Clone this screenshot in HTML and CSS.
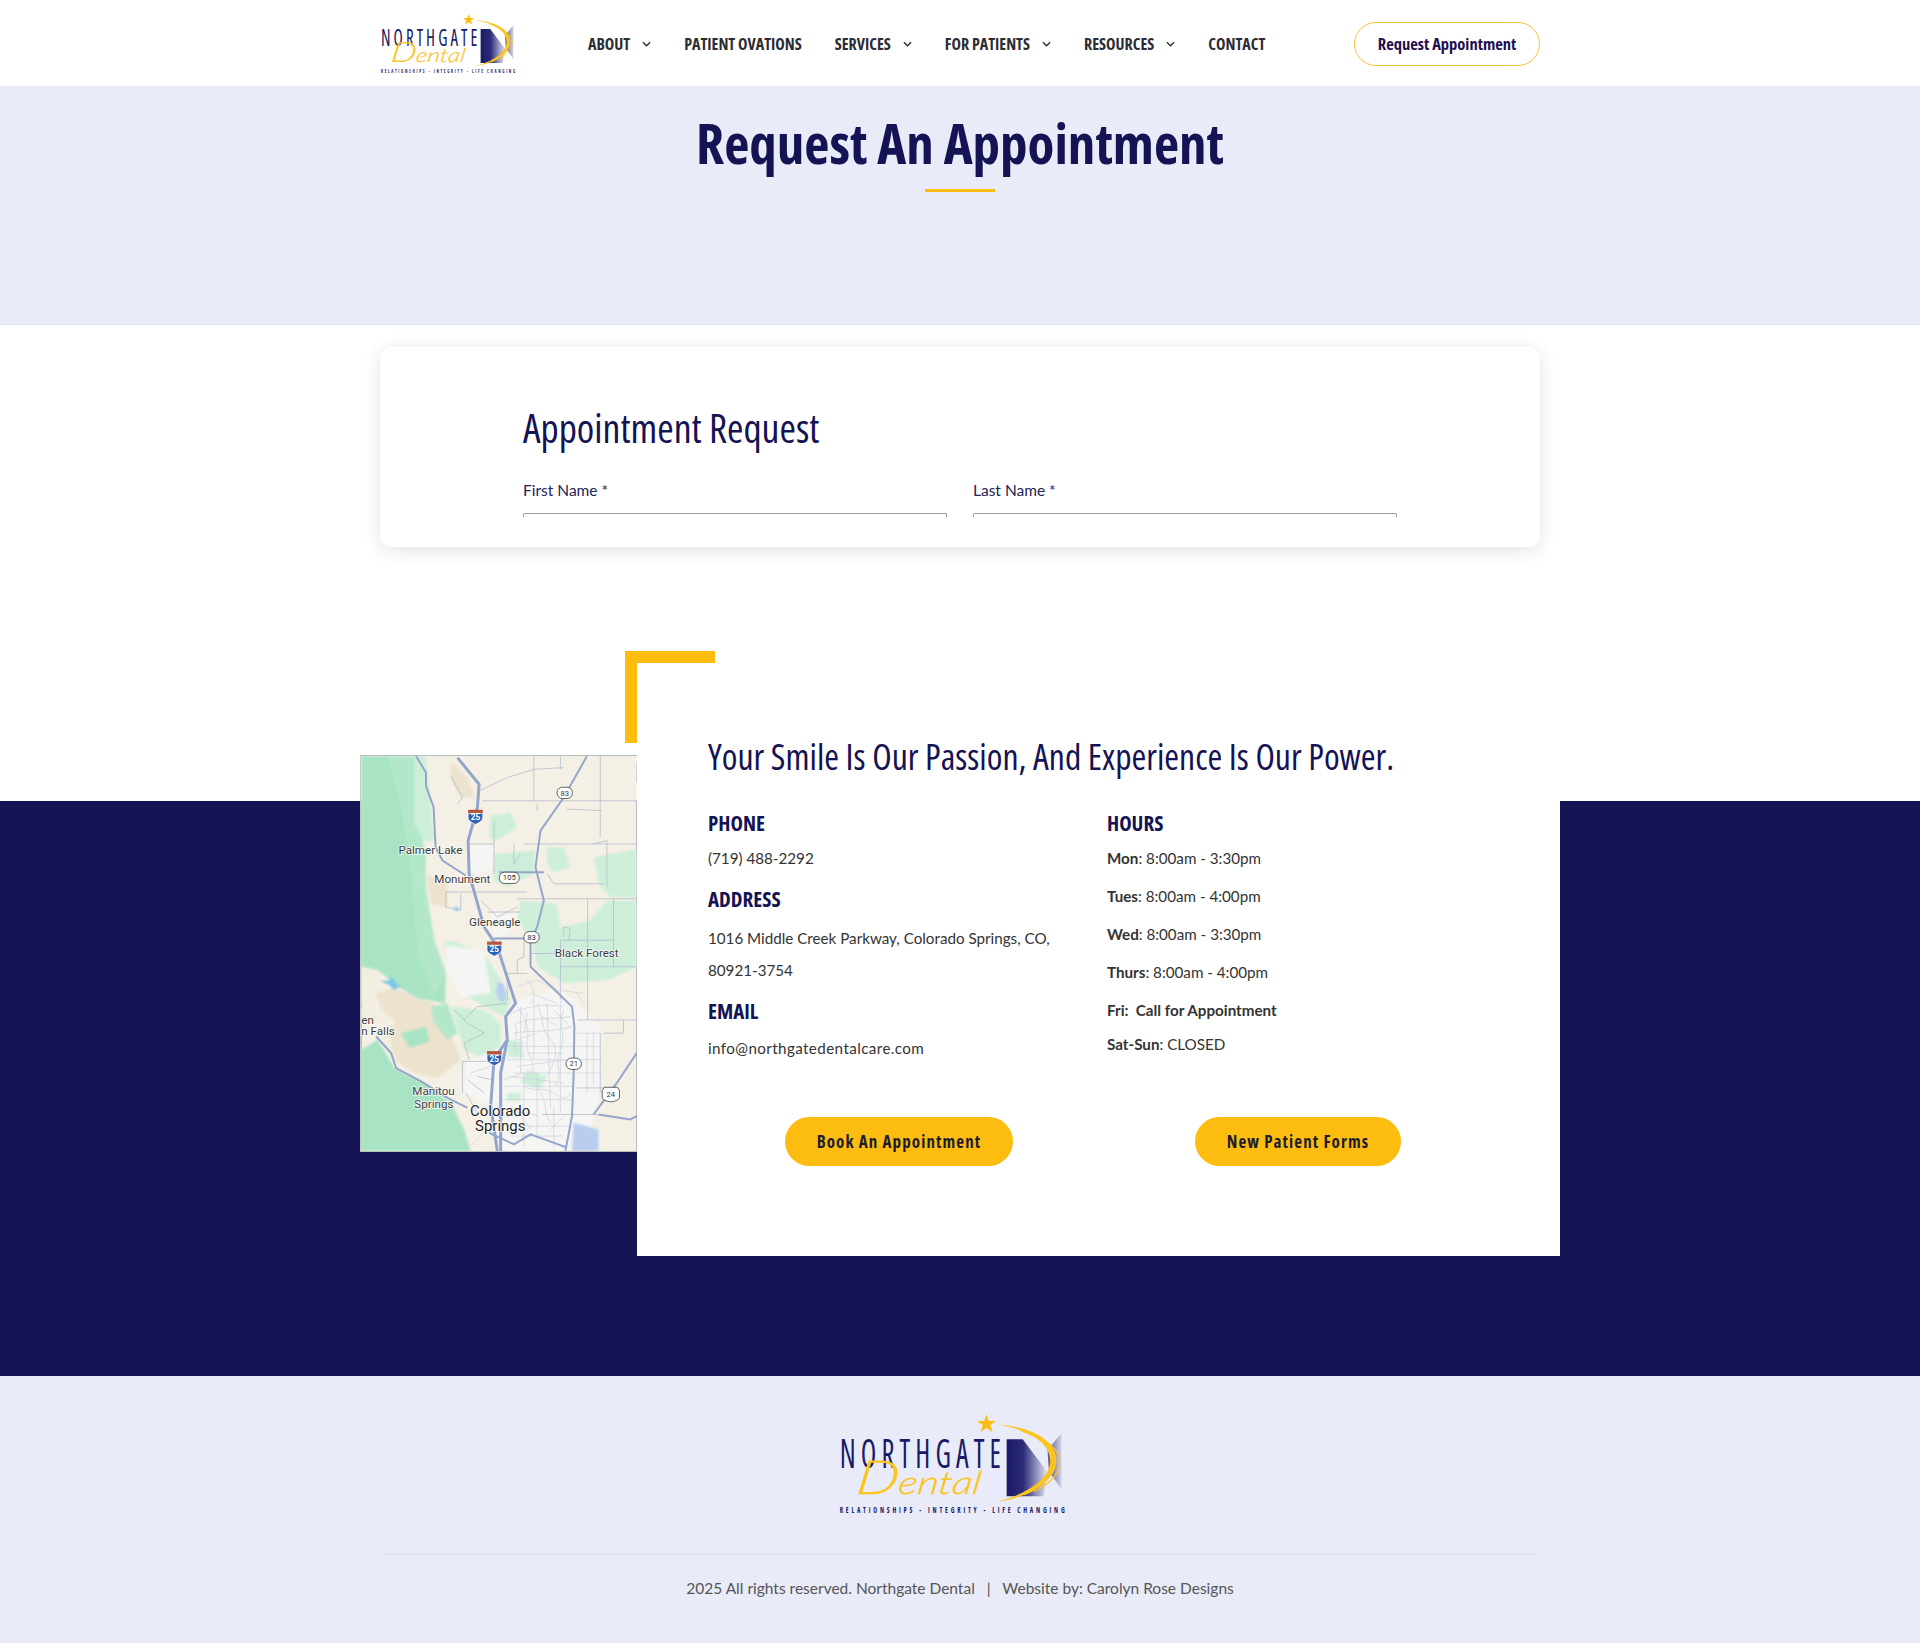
FILE: index.html
```html
<!DOCTYPE html>
<html lang="en">
<head>
  <meta charset="UTF-8" />
  <meta name="viewport" content="width=device-width, initial-scale=1.0"/>
  <title>Northgate Dental - Request An Appointment</title>
  <link rel="stylesheet" href="styles.css">
</head>
<body>

  <!-- shared logo, used in header and footer -->
  <svg class="defs" width="0" height="0" aria-hidden="true">
    <defs>
      <linearGradient id="block-fade" x1="0" x2="1" y1="0" y2="0">
        <stop offset="0" stop-color="#1b1a66"/>
        <stop offset="0.4" stop-color="#2a2a78"/>
        <stop offset="1" stop-color="#e4e6f2"/>
      </linearGradient>
      <linearGradient id="wing-fade" x1="1" x2="0" y1="0" y2="0">
        <stop offset="0" stop-color="#d4d7e6"/>
        <stop offset="1" stop-color="#4f5390"/>
      </linearGradient>
      <symbol id="logo" viewBox="55 45 680 300">
        <polygon class="logo-star" points="498,46 505,65 526,65 509,78 516,98 498,86 480,98 487,78 470,65 491,65"/>
        <polygon fill="url(#block-fade)" points="558,120 606,120 680,218 668,290 558,290"/>
        <polygon fill="url(#wing-fade)" points="722,100 680,152 684,215 722,270"/>
        <path class="logo-swoosh" d="M530 76C640 82 712 130 706 190 700 250 620 295 530 306 610 285 682 245 688 190 692 140 640 92 530 76Z"/>
        <path class="logo-arc" d="M600 94C670 118 700 150 696 190 692 230 660 262 610 286"/>
        <path class="logo-arc" d="M640 104C690 130 722 160 716 196 710 232 680 256 640 276"/>
        <text class="logo-name" transform="translate(60 205) scale(0.72 1)" textLength="668" lengthAdjust="spacing">NORTHGATE</text>
        <text class="logo-script" transform="translate(106 284) skewX(-8)" textLength="372" lengthAdjust="spacingAndGlyphs"><tspan class="logo-cap">D</tspan>ental</text>
        <text class="logo-tag" transform="translate(60 340) scale(0.72 1)" textLength="932" lengthAdjust="spacing">RELATIONSHIPS - INTEGRITY - LIFE CHANGING</text>
      </symbol>
    </defs>
  </svg>

  <header class="site-header">
    <div class="container header-row">
      <a href="#" class="logo-link"><svg class="logo-small"><use href="#logo"/></svg></a>
      <ul class="nav-links">
        <li><a href="#">About<svg class="chevron" viewBox="0 0 10 6"><path d="M1 1l4 4 4-4"/></svg></a></li>
        <li><a href="#">Patient Ovations</a></li>
        <li><a href="#">Services<svg class="chevron" viewBox="0 0 10 6"><path d="M1 1l4 4 4-4"/></svg></a></li>
        <li><a href="#">For Patients<svg class="chevron" viewBox="0 0 10 6"><path d="M1 1l4 4 4-4"/></svg></a></li>
        <li><a href="#">Resources<svg class="chevron" viewBox="0 0 10 6"><path d="M1 1l4 4 4-4"/></svg></a></li>
        <li><a href="#">Contact</a></li>
      </ul>
      <a href="#" class="header-btn">Request Appointment</a>
    </div>
  </header>

  <section class="hero">
    <h1>Request An Appointment</h1>
    <div class="hero-line"></div>
  </section>

  <section class="container form-card">
    <h2>Appointment Request</h2>
    <div class="form-row">
      <div class="field">
        <label>First Name *</label>
        <div class="field-input"></div>
      </div>
      <div class="field">
        <label>Last Name *</label>
        <div class="field-input"></div>
      </div>
    </div>
  </section>

  <section class="location">
    <div class="location-inner">
      <svg class="map" viewBox="30 45 830 1190" role="img" aria-label="Map of the area north of Colorado Springs">
        <rect x="30" y="45" width="830" height="1190" fill="#f5f0e5"/>

        <!-- terrain -->
        <g class="terrain">
          <path class="forest" d="M30 45H190L200 150 215 300 225 350 222 440 250 600 285 700 282 790 200 775 140 740 80 690 30 680Z"/>
          <path class="forest-soft" d="M110 45H190L215 300 225 440 250 600 285 700 250 770 200 640 180 400 150 200Z"/>
          <path class="forest" d="M30 930L80 900 130 985 210 1025 300 1090 340 1170 360 1235H30Z"/>
          <path class="pale" d="M30 680L80 690 90 760 60 800 30 790Z"/>
          <path class="tan" d="M75 760L130 745 200 775 250 790 300 880 330 960 260 1015 190 1000 130 960 110 900 130 840 90 810Z"/>
          <path class="forest" d="M150 880L225 860 235 905 175 925Z"/>
          <path class="forest-soft" d="M240 800L290 790 320 880 290 900 250 850Z"/>
          <path class="pale" d="M30 800L90 810 120 900 130 960 80 900 30 850Z"/>
          <path class="tan" d="M300 60L350 110 372 170 330 170 300 120Z"/>
          <path class="tan" d="M225 400L290 430 290 500 240 490Z"/>
          <path class="meadow" d="M190 45H225L250 300H220L190 250Z"/>
          <path class="meadow" d="M420 225L480 215 500 260 440 300 415 290Z"/>
          <path class="meadow" d="M590 320L640 320 660 380 610 395 590 370Z"/>
          <path class="meadow" d="M730 350L860 325V470H780L745 430Z"/>
          <path class="meadow" d="M430 340L555 330 550 400 470 440 430 420Z"/>
          <path class="meadow" d="M510 480L620 490 630 560 720 540 770 480H860V680L780 720 640 730 560 680 545 600 500 540Z"/>
          <path class="meadow" d="M280 610L300 600 400 640 440 700 480 780 460 830 400 800 340 760 300 700Z"/>
          <path class="meadow" d="M300 800L400 810 450 850 450 920 400 960 340 930Z"/>
          <path class="city" d="M285 615L400 630 420 760 330 770 290 700Z"/>
          <path class="city" d="M350 310H430V380L390 400H350Z"/>
          <path class="city" d="M420 520H500L480 575 430 590Z"/>
          <path class="city" d="M480 790L620 740 670 780 750 860 750 1060 700 1235H440L420 1100 340 1060 345 965 460 920Z"/>
          <path class="meadow" d="M530 990L590 1010 570 1050 510 1030Z"/>
          <path class="meadow" d="M470 1060H510V1085H470Z"/>
          <path class="meadow" d="M470 900L515 905 520 955 470 950Z"/>
          <path class="water" d="M445 725C465 725 472 770 460 785 440 790 430 750 445 725Z"/>
          <path class="water" d="M670 1150L745 1170 745 1235H665Z"/>
          <path class="lake" d="M85 722L115 722 120 708 135 730 148 738 128 750 115 735Z"/>
          <path class="lake" d="M310 500L325 502 320 512 310 508Z"/>
        </g>

        <!-- minor roads -->
        <path class="minor" d="M550 45V180M630 45V85M750 45V290M860 65V125M385 150L470 110 550 85 640 80M395 180H860M560 190V210M650 205L755 210M520 310H860M430 310H350M430 245V400M490 310V370L510 340M725 310L770 300V440M590 400L610 430H760M285 455H530M285 455V500L330 510V460M500 475H860M712 475V840M790 475V680M630 600H790M630 680H860M630 600V780M540 640H620M470 700H530M470 700V780M520 600V650L500 660 500 700M390 480L440 530 500 500M410 515H510M340 840L380 800 470 790M310 810L350 850 400 880 340 910 355 960M335 965H420M335 965V1060M350 1020L400 1060M680 840H860M820 840V880H760M750 880V1060M680 1045H760M575 1125H745M420 1020L380 1010M345 1060L380 1120M300 105L335 170 320 190M640 590V560L660 565 655 600"/>
        <path class="minor thin" d="M480 820C530 800 580 790 640 800M500 850C550 830 600 840 660 830M490 880C540 870 600 880 665 860M510 800V1000M550 780V960M590 790L600 1110M630 770V1120M480 920H670M470 960H670M490 1000H670M460 1040H670M455 1080H665M520 1000V1220M560 1000V1200M610 1100V1230M680 880H750M680 920H750M680 960H750M680 1000H750M710 880V1060M730 880V1040M500 740L560 720 620 750 700 760M540 760L620 790M440 1160H660M480 1190H640M360 1000L420 980M400 1180L360 1220M680 760L700 790M500 800C520 830 540 860 530 900S560 960 545 1000M560 790C580 830 570 870 600 900S610 970 590 1010M640 810C620 850 650 890 630 930S640 1000 615 1040M490 850C510 880 480 910 500 940M520 1040C550 1060 580 1040 610 1060S650 1080 660 1060M470 1110C500 1130 530 1110 560 1130M570 1060C590 1090 580 1120 600 1150M510 1130L540 1170M640 1130L600 1170M530 720C550 740 560 770 540 790M600 730L640 770M530 940H640M500 980L650 960M480 1010L640 1030M530 820L520 880M575 830L620 860M610 810L650 850M500 900L560 880M460 1020L520 1000M440 1130H520"/>

        <!-- highways -->
        <path class="road" d="M195 45L225 95V135L248 200 254 320 275 360 345 405"/>
        <path class="road" d="M75 890L120 940 135 985 210 1025 290 1075 350 1105"/>
        <path class="road" d="M540 680L665 800 672 860 670 1000 665 1130 645 1235"/>
        <path class="road" d="M710 45L640 170 570 270 555 380 580 480 560 560 540 600 540 680"/>
        <path class="road" d="M445 395H580"/>
        <path class="road" d="M730 1125L800 1030 860 940"/>
        <path class="road" d="M745 1125L840 1140 860 1130"/>
        <path class="road" d="M430 595H530"/>
        <path class="road" d="M415 1180L490 1215 540 1185 650 1225"/>
        <path class="road main" d="M320 50L385 130 380 200 352 300 355 400 400 560 440 620 495 790 465 830 470 900 430 960 420 1100 440 1235"/>
        <path class="road main" d="M470 900L450 1000 450 1235"/>

        <!-- shields -->
        <g class="shield" transform="translate(374 227)"><path class="shield-top" d="M-22 -20H22V-8H-22Z"/><path class="shield-body" d="M-22 -9H22V4C22 14 8 20 0 24 -8 20 -22 14 -22 4Z"/><text y="12">25</text></g>
        <g class="shield" transform="translate(431 624)"><path class="shield-top" d="M-22 -20H22V-8H-22Z"/><path class="shield-body" d="M-22 -9H22V4C22 14 8 20 0 24 -8 20 -22 14 -22 4Z"/><text y="12">25</text></g>
        <g class="shield" transform="translate(431 954)"><path class="shield-top" d="M-22 -20H22V-8H-22Z"/><path class="shield-body" d="M-22 -9H22V4C22 14 8 20 0 24 -8 20 -22 14 -22 4Z"/><text y="12">25</text></g>
        <g class="route" transform="translate(643 156)"><rect x="-23" y="-17" width="46" height="34" rx="16"/><text y="8">83</text></g>
        <g class="route" transform="translate(543 591)"><rect x="-23" y="-17" width="46" height="34" rx="16"/><text y="8">83</text></g>
        <g class="route" transform="translate(476 412)"><rect x="-30" y="-17" width="60" height="34" rx="16"/><text y="8">105</text></g>
        <g class="route" transform="translate(670 972)"><rect x="-23" y="-17" width="46" height="34" rx="16"/><text y="8">21</text></g>
        <g class="route" transform="translate(782 1065)"><path d="M-20 -22H20L26 -12V8C26 16 14 20 0 22 -14 20 -26 16 -26 8V-12Z"/><text y="8">24</text></g>

        <!-- place names -->
        <g class="place">
          <text x="142" y="341">Palmer Lake</text>
          <text x="250" y="428">Monument</text>
          <text x="355" y="557">Gleneagle</text>
          <text x="613" y="650">Black Forest</text>
          <text x="30" y="852">en</text>
          <text x="30" y="887">n Falls</text>
          <text x="184" y="1067">Manitou</text>
          <text x="190" y="1104">Springs</text>
          <text class="big" x="358" y="1130">Colorado</text>
          <text class="big" x="373" y="1176">Springs</text>
        </g>
      </svg>

      <div class="info-card">
        <div class="corner"></div>
        <h2>Your Smile Is Our Passion, And Experience Is Our Power.</h2>
        <div class="info-cols info-top">
          <div class="info-col">
            <h3>PHONE</h3>
            <p>(719) 488-2292</p>
            <h3 class="address-head">ADDRESS</h3>
            <p class="address">1016 Middle Creek Parkway, Colorado Springs, CO, 80921-3754</p>
            <h3 class="email-head">EMAIL</h3>
            <p class="email">info@northgatedentalcare.com</p>
          </div>
          <div class="info-col">
            <h3>HOURS</h3>
            <ul class="hours">
              <li><strong>Mon</strong>: 8:00am - 3:30pm</li>
              <li><strong>Tues</strong>: 8:00am - 4:00pm</li>
              <li><strong>Wed</strong>: 8:00am - 3:30pm</li>
              <li><strong>Thurs</strong>: 8:00am - 4:00pm</li>
              <li><strong>Fri:&nbsp; Call for Appointment</strong></li>
              <li class="last"><strong>Sat-Sun</strong>: CLOSED</li>
            </ul>
          </div>
        </div>
        <div class="info-cols btn-row">
          <div class="info-col"><a href="#" class="gold-btn book">Book An Appointment</a></div>
          <div class="info-col"><a href="#" class="gold-btn forms">New Patient Forms</a></div>
        </div>
      </div>
    </div>
  </section>

  <footer>
    <svg class="logo-large"><use href="#logo"/></svg>
    <div class="container footer-bottom">
      <p>2025 All rights reserved. Northgate Dental &nbsp; | &nbsp; Website by: Carolyn Rose Designs</p>
    </div>
  </footer>

</body>
</html>
```

FILE: styles.css
```css
/* === Global Styles === */
body {
  font-family: "Lato", "Open Sans", sans-serif;
  margin: 0;
  padding: 0;
  background-color: #fff;
  color: #333;
  font-size: 15.2px;
}

h1, h2, h3, p, ul {
  margin: 0;
  padding: 0;
}

a {
  text-decoration: none;
  color: inherit;
}

.container {
  width: 1160px;
  margin: 0 auto;
}

.defs {
  position: absolute;
}

/* condensed face, stands in for the site's narrow headings */
.hero h1,
.form-card h2,
.info-card h2,
.info-col h3,
.nav-links a,
.header-btn,
.gold-btn {
  font-family: "Open Sans", sans-serif;
  font-stretch: 75%;
}

/* === Logo === */
.logo-star { fill: #fdbd10; }
.logo-swoosh { fill: #fcc41e; }
.logo-arc { fill: none; stroke: #fcc41e; stroke-width: 3.5; }
.logo-name {
  font-family: "Open Sans", sans-serif;
  font-stretch: 75%;
  font-size: 118px;
  fill: #1b1a66;
}
.logo-script {
  font-family: "Lato", sans-serif;
  font-weight: 300;
  font-style: italic;
  font-size: 96px;
  fill: #fcc41e;
  stroke: #fcc41e;
  stroke-width: 1;
}
.logo-cap { font-size: 140px; }
.logo-tag {
  font-family: "Open Sans", sans-serif;
  font-stretch: 75%;
  font-weight: 700;
  font-size: 27px;
  fill: #1b1a66;
}

.logo-small {
  display: block;
  width: 136px;
  height: 60px;
}

.logo-large {
  display: block;
  width: 228px;
  height: 101px;
  margin: 0 auto;
  position: relative;
  left: -8px;
}

/* === Navbar === */
.site-header {
  box-sizing: border-box;
  height: 86px;
  padding-top: 2px;
  background: #fff;
}

.header-row {
  height: 100%;
  display: flex;
  align-items: center;
}

.logo-link {
  margin-right: 72px;
}

.nav-links {
  list-style: none;
  display: flex;
  gap: 33px;
  flex: 1;
}

.nav-links a {
  display: flex;
  align-items: center;
  font-size: 16px;
  font-weight: 700;
  text-transform: uppercase;
  color: #2c2c33;
}

.chevron {
  width: 9px;
  height: 6px;
  margin-left: 12px;
  fill: none;
  stroke: #2c2c33;
  stroke-width: 1.5;
}

.header-btn {
  box-sizing: border-box;
  width: 186px;
  height: 44px;
  line-height: 42px;
  text-align: center;
  border: 1px solid #f3c33c;
  border-radius: 22px;
  font-size: 16.5px;
  font-weight: 700;
  color: #1f0f4d;
}

/* === Hero === */
.hero {
  box-sizing: border-box;
  height: 239px;
  background-color: #e9ecf8;
  border-bottom: 1px solid #dfe2ee;
  padding-top: 26px;
  text-align: center;
}

.hero h1 {
  font-size: 55px;
  line-height: 62px;
  font-weight: 700;
  color: #141354;
}

.hero-line {
  width: 70px;
  height: 3px;
  margin: 15px auto 0;
  background: #fdbd10;
}

/* === Form card === */
.form-card {
  position: relative;
  z-index: 1;
  box-sizing: border-box;
  height: 200px;
  margin-top: 22px;
  padding: 57px 143px 0;
  background: #fff;
  border-radius: 12px;
  box-shadow: 0 3px 18px rgba(0, 0, 0, 0.12);
}

.form-card h2 {
  font-size: 39.7px;
  line-height: 48px;
  font-weight: 400;
  color: #141354;
}

.form-row {
  display: flex;
  gap: 26px;
  margin-top: 28px;
}

.field {
  width: 424px;
}

.field label {
  display: block;
  font-size: 15.5px;
  line-height: 20px;
  color: #242457;
}

.field-input {
  height: 3px;
  margin-top: 13px;
  border: 1px solid #9a9a9a;
  border-bottom: 0;
  border-radius: 2px 2px 0 0;
}

/* === Location === */
.location {
  margin-top: 0;
  padding: 104px 0 120px;
  background: linear-gradient(#fff 254px, #141354 254px);
}

.location-inner {
  width: 1200px;
  margin: 0 auto;
  display: flex;
  align-items: flex-start;
}

.map {
  display: block;
  box-sizing: border-box;
  width: 277px;
  height: 397px;
  margin-top: 104px;
  flex: none;
  border-top: 1px solid #b9bdb9;
  border-bottom: 1px solid #b9bdb9;
  border-left: 1px solid #c5cbc5;
}

.terrain { filter: blur(3px); }
.forest { fill: #a8e4c4; }
.forest-soft { fill: #b3e7ca; }
.meadow { fill: #cdefd9; }
.tan { fill: #ece2cd; }
.pale { fill: #f2eee0; }
.city { fill: #f5f5f4; }
.water { fill: #b9cdef; }
.lake { fill: #7cc4e8; }
.minor { fill: none; stroke: #b5bccd; stroke-width: 2.5; }
.minor.thin { stroke: #c5cad8; stroke-width: 1.8; }
.road { fill: none; stroke: #93a5cb; stroke-width: 6; }
.road.main { stroke-width: 9; }

.shield text {
  font: 700 25px "Roboto", sans-serif;
  fill: #fff;
  text-anchor: middle;
}
.shield-top { fill: #b5543f; }
.shield-body { fill: #2a62b8; stroke: #fff; stroke-width: 2; }

.route rect, .route path {
  fill: #fff;
  stroke: #444;
  stroke-width: 2.5;
}
.route text {
  font: 400 23px "Roboto", sans-serif;
  fill: #333;
  stroke: none;
  text-anchor: middle;
}

.place text {
  font: 400 35px "Roboto", sans-serif;
  fill: #3a3a3a;
  stroke: #fff;
  stroke-width: 4px;
  paint-order: stroke;
}
.place text.big {
  font-size: 45px;
  fill: #222;
}

.info-card {
  position: relative;
  box-sizing: border-box;
  width: 923px;
  height: 605px;
  padding: 82px 71px 0;
  background: #fff;
}

.corner {
  position: absolute;
  top: 0;
  left: -12px;
  width: 78px;
  height: 80px;
  border-top: 12px solid #fdbd10;
  border-left: 12px solid #fdbd10;
}

.info-card h2 {
  font-size: 35.7px;
  line-height: 46px;
  font-weight: 400;
  color: #141354;
  white-space: nowrap;
}

.info-cols {
  display: flex;
  gap: 17px;
}

.info-col {
  width: 382px;
}

.info-col h3 {
  font-size: 21px;
  line-height: 26px;
  font-weight: 700;
  color: #141354;
}

.info-top {
  margin-top: 31px;
}

.info-col p {
  line-height: 32px;
  margin-top: 6px;
}

.info-col .address-head {
  margin-top: 12px;
}

.info-col .address {
  margin-top: 10px;
}

.info-col .email-head {
  margin-top: 12px;
}

.info-col .email {
  margin-top: 8px;
  letter-spacing: 0.4px;
}

.hours {
  list-style: none;
  margin-top: 6px;
}

.hours li {
  height: 32px;
  line-height: 32px;
  margin-bottom: 5.9px;
}

.hours li.last {
  margin-top: -3px;
}

.btn-row {
  margin-top: 51px;
}

.btn-row .info-col {
  text-align: center;
}

.gold-btn {
  display: inline-block;
  box-sizing: border-box;
  height: 49px;
  line-height: 49px;
  border-radius: 25px;
  background: #fdbd10;
  color: #1c1c2e;
  font-size: 17px;
  font-weight: 700;
  letter-spacing: 1.1px;
}

.book { width: 228px; }
.forms { width: 206px; }

/* === Footer === */
footer {
  box-sizing: border-box;
  height: 267px;
  background-color: #e9ecf8;
  padding-top: 38px;
}

.footer-bottom {
  margin-top: 39px;
  border-top: 1px solid #dcdfec;
  padding-top: 23px;
  text-align: center;
}

.footer-bottom p {
  font-size: 15.5px;
  line-height: 20px;
  color: #555;
}
```
